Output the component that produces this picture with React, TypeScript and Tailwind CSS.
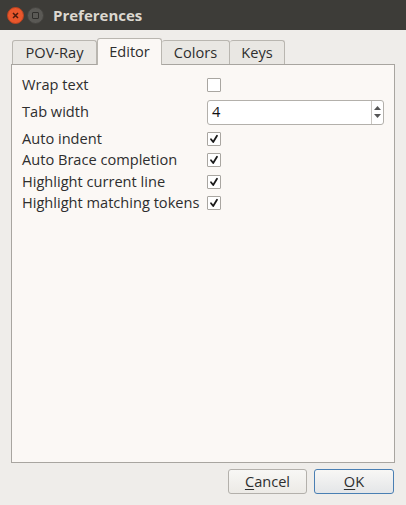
import React from "react";

const font = { fontFamily: '"Open Sans", "DejaVu Sans", sans-serif' };

const Check = ({ checked }: { checked: boolean }) => (
  <div className="w-[14px] h-[14px] border border-[#a9a6a1] bg-white rounded-[1px] flex items-center justify-center">
    {checked && (
      <svg width="10" height="10" viewBox="0 0 10 10">
        <path d="M2 5.2 L4.2 8 L8 1.8" fill="none" stroke="#1a1a1a" strokeWidth="1.8" strokeLinecap="round" strokeLinejoin="round" />
      </svg>
    )}
  </div>
);

const Row = ({ label, children, h = "h-[21.5px]" }: { label: string; children: React.ReactNode; h?: string }) => (
  <div className={`flex items-center ${h}`}>
    <div className="w-[185px] shrink-0">{label}</div>
    {children}
  </div>
);

export default function App() {
  return (
    <div className="w-[406px] h-[505px] bg-[#efedea] flex flex-col text-[14.6px] text-[#2e2e2e]" style={font}>
      <div className="h-[30px] bg-[#3d3c38] flex items-center px-[7px] gap-[3px] shrink-0">
        <div className="w-[17px] h-[17px] rounded-full bg-[#e9572c] flex items-center justify-center border border-[#b84220]">
          <svg width="7" height="7" viewBox="0 0 7 7">
            <path d="M1 1 L6 6 M6 1 L1 6" stroke="#4a1a0d" strokeWidth="1.5" />
          </svg>
        </div>
        <div className="w-[17px] h-[17px] rounded-full bg-[#5a5955] border border-[#44433f] flex items-center justify-center">
          <div className="w-[7px] h-[7px] border-[1.5px] border-[#2f2e2b] rounded-[1px]" />
        </div>
        <div className="ml-[6px] text-[15px] font-bold text-[#dcd8d0]">Preferences</div>
      </div>

      <div className="flex-1 flex flex-col px-[11px] pt-[8px]">
        <div className="flex items-end h-[26px] pl-[1px]">
          <div className="h-[24px] w-[85px] flex items-center justify-center border border-b-0 border-[#b9b6b0] bg-[#e9e7e3] rounded-t-[3px]">POV-Ray</div>
          <div className="h-[27px] w-[65px] flex items-center justify-center border border-b-0 border-[#b9b6b0] bg-[#fbf8f5] rounded-t-[3px] -mb-[1px] relative z-10">Editor</div>
          <div className="h-[24px] w-[68px] flex items-center justify-center border border-b-0 border-l-0 border-[#b9b6b0] bg-[#e9e7e3] rounded-t-[3px]">Colors</div>
          <div className="h-[24px] w-[55px] flex items-center justify-center border border-b-0 border-l-0 border-[#b9b6b0] bg-[#e9e7e3] rounded-t-[3px]">Keys</div>
        </div>
        <div className="h-[399px] border border-[#a8a5a0] bg-[#fbf8f5] px-[10px] pt-[9px] flex flex-col">
          <Row label="Wrap text" h="h-[22px]">
            <Check checked={false} />
          </Row>
          <Row label="Tab width" h="h-[32px]">
            <div className="w-[177px] h-[25px] border border-[#b3b0ab] rounded-[3px] bg-white flex items-stretch">
              <div className="flex-1 flex items-center pl-[4px] text-[#111]">4</div>
              <div className="w-[12px] border-l border-[#c9c6c1] flex flex-col items-center justify-center gap-[4px]">
                <svg width="7" height="4" viewBox="0 0 7 4"><path d="M0 4 L3.5 0 L7 4Z" fill="#555" /></svg>
                <svg width="7" height="4" viewBox="0 0 7 4"><path d="M0 0 L3.5 4 L7 0Z" fill="#555" /></svg>
              </div>
            </div>
          </Row>
          <Row label="Auto indent">
            <Check checked />
          </Row>
          <Row label="Auto Brace completion">
            <Check checked />
          </Row>
          <Row label="Highlight current line">
            <Check checked />
          </Row>
          <Row label="Highlight matching tokens">
            <Check checked />
          </Row>
        </div>
        <div className="flex justify-end gap-[7px] mt-[6px] pr-[1px]">
          <button className="w-[79px] h-[25px] border border-[#b3b0ab] rounded-[3px] bg-gradient-to-b from-[#f8f7f5] to-[#eceae6]">
            <span className="underline underline-offset-2">C</span>ancel
          </button>
          <button className="w-[80px] h-[25px] border border-[#4a7fb3] rounded-[3px] bg-gradient-to-b from-[#f8f7f5] to-[#e4e6e8]">
            <span className="underline underline-offset-2">O</span>K
          </button>
        </div>
      </div>
    </div>
  );
}
